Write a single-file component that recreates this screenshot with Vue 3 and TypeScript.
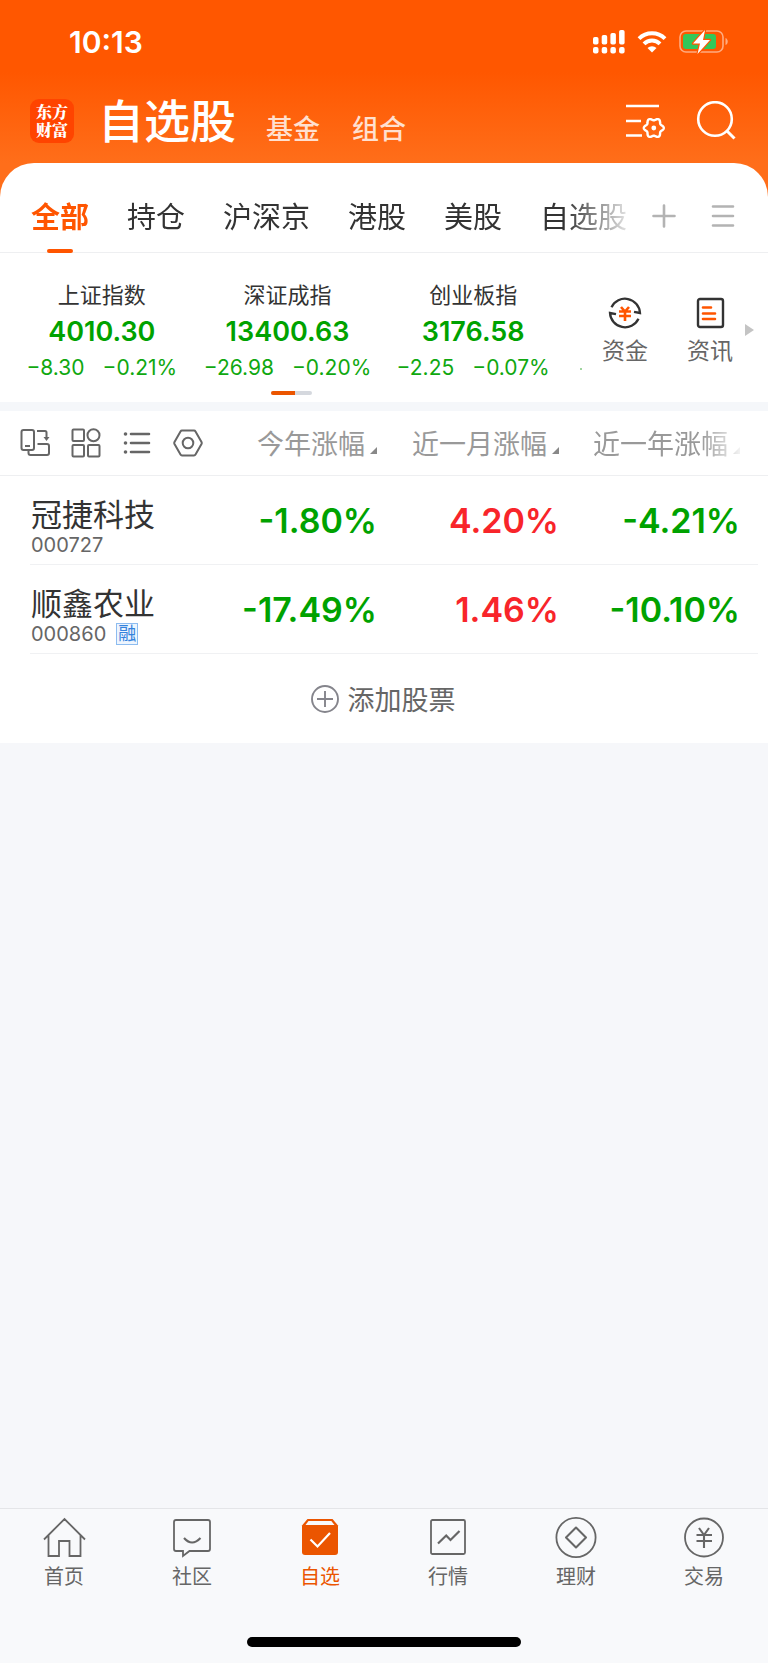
<script setup lang="ts">
import { ref } from 'vue'

interface IndexQuote {
  name: string
  price: string
  change: string
  percent: string
}

interface Stock {
  name: string
  code: string
  margin: boolean
  returns: string[]
}

const groups: string[] = ['全部', '持仓', '沪深京', '港股', '美股', '自选股']
const activeGroup = ref('全部')

const indices: IndexQuote[] = [
  { name: '上证指数', price: '4010.30', change: '−8.30', percent: '−0.21%' },
  { name: '深证成指', price: '13400.63', change: '−26.98', percent: '−0.20%' },
  { name: '创业板指', price: '3176.58', change: '−2.25', percent: '−0.07%' },
]

const columns: string[] = ['今年涨幅', '近一月涨幅', '近一年涨幅']

const stocks: Stock[] = [
  { name: '冠捷科技', code: '000727', margin: false, returns: ['-1.80%', '4.20%', '-4.21%'] },
  { name: '顺鑫农业', code: '000860', margin: true, returns: ['-17.49%', '1.46%', '-10.10%'] },
]

const navItems: string[] = ['首页', '社区', '自选', '行情', '理财', '交易']
const activeNav = ref('自选')

const tone = (value: string): string => (value.startsWith('-') ? 'down' : 'up')

// Outline of a six-lobed gear around (cx, cy).
function gear(cx: number, cy: number, radius: number, lobe: number): string {
  const points: string[] = []
  for (let i = 0; i < 72; i++) {
    const a = (i * Math.PI) / 36
    const r = radius + lobe * Math.cos(6 * a)
    points.push(`${(cx + r * Math.cos(a)).toFixed(2)} ${(cy + r * Math.sin(a)).toFixed(2)}`)
  }
  return `M${points.join('L')}Z`
}
</script>

<template>
  <div class="app">
    <header class="top">
      <div class="status">
        <span class="time">10:13</span>
        <div class="status-icons">
          <svg width="32" height="24" viewBox="0 0 32 24" fill="#fff" aria-hidden="true">
            <rect x="0" y="7" width="5.500" height="7.500" rx="1.800" />
            <rect x="8.700" y="5" width="5.500" height="9.500" rx="1.800" />
            <rect x="17.400" y="3" width="5.500" height="11.500" rx="1.800" />
            <rect x="26.100" y="0" width="5.500" height="14.500" rx="1.800" />
            <rect x="0" y="17" width="5.500" height="6.500" rx="2" />
            <rect x="8.700" y="17" width="5.500" height="6.500" rx="2" />
            <rect x="17.400" y="17" width="5.500" height="6.500" rx="2" />
            <rect x="26.100" y="17" width="5.500" height="6.500" rx="2" />
          </svg>
          <svg width="30" height="24" viewBox="0 0 30 24" aria-hidden="true">
            <g fill="none" stroke="#fff" stroke-width="4">
              <path d="M2 8.600a18.500 18.500 0 0 1 26 0" />
              <path d="M7 13.800a11.400 11.400 0 0 1 16 0" />
            </g>
            <path d="M15 22.600l-4.500-4.600a6.400 6.400 0 0 1 9 0z" fill="#fff" />
          </svg>
          <svg width="50" height="26" viewBox="0 0 50 26" aria-hidden="true">
            <rect x="1" y="2" width="43" height="21" rx="6" fill="none" stroke="#fff" stroke-opacity=".5" stroke-width="1.600" />
            <path d="M46.500 9v7c3-1 3-6 0-7z" fill="#fff" fill-opacity=".5" />
            <rect x="4" y="5" width="33" height="15" rx="3" fill="#34c759" />
            <path d="M26 1L14 14.500h7L18.500 25 31 11h-7z" fill="#fff" stroke="#ff5800" stroke-width="2.400" paint-order="stroke" stroke-linejoin="round" />
          </svg>
        </div>
      </div>
      <div class="title-row">
        <div class="logo">东方财富</div>
        <h1>自选股</h1>
        <nav class="sections">
          <a href="#fund">基金</a>
          <a href="#portfolio">组合</a>
        </nav>
        <div class="title-actions">
          <button type="button" aria-label="列表设置">
            <svg width="40" height="40" viewBox="0 0 40 40" fill="none" stroke="#fff" stroke-width="2.600" aria-hidden="true">
              <path d="M1 5h33M1 20h15M1 34.500h16" />
              <path :d="gear(28.8, 27, 8.8, 1.2)" stroke-width="2.400" stroke-linejoin="round" />
              <circle cx="28.800" cy="27" r="2.400" fill="#fff" stroke="none" />
            </svg>
          </button>
          <button type="button" aria-label="搜索">
            <svg width="40" height="40" viewBox="0 0 40 40" fill="none" stroke="#fff" stroke-width="2.600" aria-hidden="true">
              <circle cx="19" cy="18" r="16.800" />
              <path d="M30.500 29.500l8 8" stroke-width="3" />
            </svg>
          </button>
        </div>
      </div>
    </header>

    <main class="panel">
      <div class="group-bar">
        <div class="groups" role="tablist">
          <button
            v-for="group in groups"
            :key="group"
            type="button"
            role="tab"
            class="group"
            :class="{ active: group === activeGroup }"
            :aria-selected="group === activeGroup"
            @click="activeGroup = group"
          >{{ group }}</button>
        </div>
        <div class="group-tools">
          <button type="button" aria-label="添加分组">
            <svg width="24" height="24" viewBox="0 0 24 24" stroke="#b3b3b3" stroke-width="2.600" stroke-linecap="round" aria-hidden="true">
              <path d="M1.500 12h21M12 1.500v21" />
            </svg>
          </button>
          <button type="button" aria-label="分组菜单">
            <svg width="24" height="24" viewBox="0 0 24 24" stroke="#b3b3b3" stroke-width="2.600" stroke-linecap="round" aria-hidden="true">
              <path d="M2 2.500h20M2 12h20M2 21.500h20" />
            </svg>
          </button>
        </div>
      </div>

      <section class="market">
        <div class="indices">
          <div class="quotes">
            <article v-for="item in indices" :key="item.name" class="quote">
              <span class="quote-name">{{ item.name }}</span>
              <strong>{{ item.price }}</strong>
              <span class="quote-change"><span>{{ item.change }}</span><span>{{ item.percent }}</span></span>
            </article>
          </div>
          <div class="pager"><i></i></div>
        </div>
        <div class="shortcuts">
          <a href="#capital" class="shortcut">
            <svg width="34" height="34" viewBox="0 0 34 34" fill="none" stroke="#333" stroke-width="2.300" aria-hidden="true">
              <path d="M3.500 11.200A15 15 0 0 1 32 17l-6-1.200M30.500 22.800A15 15 0 0 1 2 17l6 1.200" />
              <path d="M13 11l4 4.500 4-4.500M11 15.500h12M11 20h12M17 15.500V25" stroke="#ff5500" stroke-width="2.600" />
            </svg>
            <span>资金</span>
          </a>
          <a href="#news" class="shortcut">
            <svg width="34" height="34" viewBox="0 0 34 34" fill="none" stroke="#333" stroke-width="2.400" aria-hidden="true">
              <rect x="5" y="3" width="25" height="28" rx="2" />
              <path d="M10 11.500h8M10 17.500h12M10 23h12" stroke="#ff5500" stroke-width="2.600" stroke-linecap="round" />
            </svg>
            <span>资讯</span>
          </a>
        </div>
        <button type="button" class="more" aria-label="更多">
          <svg width="10" height="14" viewBox="0 0 10 14" aria-hidden="true"><path d="M0 1v12l9-6z" fill="#c4c4c4" /></svg>
        </button>
      </section>

      <table class="stocks">
        <colgroup>
          <col />
          <col class="col-first" />
          <col class="col-second" />
          <col class="col-third" />
        </colgroup>
        <thead>
          <tr>
            <th>
              <div class="tools">
                <button type="button" aria-label="横屏">
                  <svg width="30" height="30" viewBox="0 0 30 30" aria-hidden="true">
                    <rect x="1.500" y="2" width="12.500" height="20" rx="2" />
                    <path d="M5 18h5M17 3h8q1.500 0 1.500 1.500V9M17.500 16H27q2 0 2 2v7q0 2-2 2H10.500q-2 0-2-2v-3" />
                    <path d="M23.500 9h6l-3 4z" fill="#666" stroke="none" />
                  </svg>
                </button>
                <button type="button" aria-label="宫格">
                  <svg width="30" height="30" viewBox="0 0 30 30" aria-hidden="true">
                    <rect x="1.500" y="1.500" width="11.500" height="11.500" rx="1" />
                    <circle cx="22.500" cy="7.200" r="6" />
                    <rect x="1.500" y="17" width="11.500" height="11.500" rx="1" />
                    <rect x="17" y="17" width="11.500" height="11.500" rx="1" />
                  </svg>
                </button>
                <button type="button" aria-label="列表">
                  <svg width="30" height="30" viewBox="0 0 30 30" aria-hidden="true">
                    <path d="M9 6h18M9 15h18M9 24h18" stroke-width="2.600" stroke-linecap="round" />
                    <g fill="#666" stroke="none">
                      <circle cx="3.500" cy="6" r="1.800" /><circle cx="3.500" cy="15" r="1.800" /><circle cx="3.500" cy="24" r="1.800" />
                    </g>
                  </svg>
                </button>
                <button type="button" aria-label="设置">
                  <svg width="30" height="30" viewBox="0 0 30 30" aria-hidden="true">
                    <path d="M9 2.500h12q1 0 1.500.9l6 10.600q.5 1 0 2l-6 10.600q-.5.900-1.500.9H9q-1 0-1.500-.9L1.500 16q-.5-1 0-2l6-10.600Q8 2.500 9 2.500z" />
                    <circle cx="15" cy="15" r="5.300" />
                  </svg>
                </button>
              </div>
            </th>
            <th v-for="column in columns" :key="column">
              <button type="button" class="sort">
                {{ column }}<svg width="7" height="7" viewBox="0 0 7 7" aria-hidden="true"><path d="M7 0v7H0z" fill="#888" /></svg>
              </button>
            </th>
          </tr>
        </thead>
        <tbody>
          <tr v-for="stock in stocks" :key="stock.code">
            <td>
              <span class="stock-name">{{ stock.name }}</span>
              <span class="stock-code">{{ stock.code }}<b v-if="stock.margin">融</b></span>
            </td>
            <td v-for="(value, i) in stock.returns" :key="i" class="value" :class="tone(value)">{{ value }}</td>
          </tr>
        </tbody>
      </table>

      <button type="button" class="add">
        <svg width="30" height="30" viewBox="0 0 30 30" fill="none" stroke="#85858c" stroke-width="1.900" aria-hidden="true">
          <circle cx="15" cy="15" r="13" /><path d="M7 15h16M15 7v16" />
        </svg>
        添加股票
      </button>
    </main>

    <footer class="bottom">
      <nav class="nav">
        <a
          v-for="(item, i) in navItems"
          :key="item"
          :href="'#tab' + i"
          :class="{ active: item === activeNav }"
          @click.prevent="activeNav = item"
        >
          <svg width="42" height="42" viewBox="0 0 42 42" aria-hidden="true">
            <path v-if="i === 0" d="M1 22.500L21.500 2 42 22.500M5.500 18.500v20.500h10.500V24h10.500v15H37.500V18.500" />
            <template v-else-if="i === 1">
              <path d="M5 3h32q2 0 2 2v27q0 2-2 2H18.500L12 39v-5H5q-2 0-2-2V5q0-2 2-2z" />
              <path d="M13 21q8 9 16.500 0" stroke-width="2.100" />
            </template>
            <template v-else-if="i === 2">
              <path d="M3 8.500L8.500 2h25L39 8.500V35q0 3-3 3H6q-3 0-3-3z" fill="#eb5500" stroke="none" />
              <path d="M9.500 4h22.800l3.200 4H6.500z" fill="#f8f9fb" stroke="none" />
              <path d="M11.500 22.500l7 7L31 16" stroke="#fff" stroke-width="2.200" />
            </template>
            <template v-else-if="i === 3">
              <rect x="4" y="3" width="34" height="34" rx="1.500" />
              <path d="M11 26.500l8.200-8 4.300 4.500 9-9" stroke-width="2.200" />
            </template>
            <template v-else-if="i === 4">
              <circle cx="21" cy="20.500" r="19.600" />
              <path d="M21 10.500L31 20.500 21 30.500 11 20.500z" stroke-width="2.100" stroke-linejoin="round" />
            </template>
            <template v-else>
              <circle cx="21" cy="20.500" r="19" />
              <path d="M16 11l5 7 5-7M13.500 18h15.500M13.500 24h15.500M21 18v13" stroke-width="2.100" />
            </template>
          </svg>
          <span>{{ item }}</span>
        </a>
      </nav>
      <div class="home-indicator"></div>
    </footer>
  </div>
</template>

<style>
body {
  margin: 0;
  background: #f6f7fa;
}
</style>

<style scoped>
.app {
  display: flex;
  flex-direction: column;
  min-height: 100vh;
  background: #f6f7fa;
  color: #333;
  font-family: Inter, "Noto Sans CJK SC", sans-serif;
}

button {
  display: flex;
  align-items: center;
  padding: 0;
  border: 0;
  background: none;
  color: inherit;
  font: inherit;
  cursor: pointer;
}

a {
  color: inherit;
  text-decoration: none;
}

svg {
  display: block;
  flex: none;
}

.top {
  height: 197px;
  box-sizing: border-box;
  margin-bottom: -34px;
  background: linear-gradient(#ff5700 0, #ff5700 72px, #ff6e1a 163px);
  color: #fff;
}

.status {
  display: flex;
  align-items: center;
  justify-content: space-between;
  height: 84px;
  padding: 0 39px 0 69px;
}

.time {
  font-size: 30px;
  font-weight: 600;
}

.status-icons {
  display: flex;
  align-items: center;
  gap: 12px;
}

.title-row {
  display: flex;
  align-items: center;
  height: 73px;
  padding: 0 32px 0 30px;
}

.logo {
  box-sizing: border-box;
  width: 44px;
  height: 44px;
  padding: 4px 6px;
  border-radius: 9px;
  background: #ff4400;
  font-family: "Noto Serif CJK SC", "Noto Sans CJK SC", serif;
  font-size: 16px;
  font-weight: 900;
  line-height: 18px;
}

h1 {
  margin: 0 0 0 24px;
  font-size: 46px;
  font-weight: 500;
  line-height: 60px;
}

.sections {
  display: flex;
  gap: 32px;
  margin-left: 30px;
  padding-top: 19px;
  color: #ffe0d0;
  font-size: 27px;
  font-weight: 500;
  line-height: 36px;
}

.title-actions {
  display: flex;
  gap: 31px;
  margin-left: auto;
}

.panel {
  border-radius: 34px 34px 0 0;
  background: #fff;
}

.group-bar {
  display: flex;
  align-items: center;
  height: 89px;
  border-bottom: 1px solid #eeeff1;
}

.groups {
  display: flex;
  flex: 1;
  gap: 38px;
  min-width: 0;
  height: 90px;
  padding-left: 31px;
  overflow: hidden;
  mask-image: linear-gradient(90deg, #000 calc(100% - 72px), transparent);
}

.group {
  position: relative;
  flex: none;
  padding-top: 14px;
  color: #333;
  font-size: 29px;
}

.group.active {
  color: #ff5500;
  font-weight: 700;
}

.group.active::after {
  content: "";
  position: absolute;
  bottom: 0;
  left: calc(50% - 13px);
  width: 26px;
  height: 4px;
  border-radius: 2px;
  background: #ff5500;
}

.group-tools {
  display: flex;
  gap: 35px;
  padding: 17px 33px 0 15px;
}

.market {
  display: flex;
  height: 149px;
  border-bottom: 9px solid #f5f7fa;
}

.indices {
  position: relative;
  flex: 1;
  min-width: 0;
  padding: 27px 0 0 9px;
}

.indices::after {
  content: "";
  position: absolute;
  right: 11px;
  bottom: 32px;
  width: 2px;
  height: 2px;
  border-radius: 1px;
  background: #7fc77f;
}

.quotes {
  display: grid;
  grid-template-columns: repeat(3, 1fr);
  max-width: 557px;
}

.quote {
  display: flex;
  flex-direction: column;
  align-items: center;
  white-space: nowrap;
}

.quote-name {
  font-size: 22px;
  line-height: 31px;
}

.quote strong {
  color: #00a200;
  font-size: 27px;
  font-weight: 600;
  line-height: 41px;
}

.quote-change {
  display: flex;
  gap: 18px;
  color: #10a810;
  font-size: 21px;
  line-height: 32px;
}

.pager {
  width: 41px;
  height: 4px;
  margin: 7px auto 0 262px;
  border-radius: 2px;
  background: #d5d8de;
}

.pager i {
  display: block;
  width: 24px;
  height: 4px;
  border-radius: 2px 0 0 2px;
  background: #eb5500;
}

.shortcuts {
  display: flex;
  gap: 21px;
}

.shortcut {
  display: flex;
  flex-direction: column;
  align-items: center;
  gap: 4px;
  width: 64px;
  padding-top: 43px;
  color: #666;
  font-size: 23px;
  line-height: 34px;
}

.more {
  width: 26px;
  padding: 4px 0 0 3px;
}

.stocks {
  width: 100%;
  border-collapse: separate;
  border-spacing: 0;
  table-layout: fixed;
}

.col-first {
  width: 163px;
}

.col-second {
  width: 182px;
}

.col-third {
  width: 209px;
}

th {
  height: 65px;
  box-sizing: border-box;
  padding: 0;
  border-bottom: 1px solid #eeeff1;
  font-weight: 400;
}

.tools {
  display: flex;
  gap: 21px;
  padding-left: 20px;
}

.tools svg {
  fill: none;
  stroke: #666;
  stroke-width: 2;
}

.sort {
  float: right;
  align-items: baseline;
  gap: 5px;
  padding-top: 4px;
  color: #999;
  font-size: 27px;
  line-height: 36px;
  white-space: nowrap;
}

th:last-child .sort {
  margin-right: 28px;
  mask-image: linear-gradient(90deg, #000 calc(100% - 40px), rgba(0, 0, 0, 0.1));
}

td {
  height: 89px;
  box-sizing: border-box;
  padding: 0;
  background: linear-gradient(#f0f1f3, #f0f1f3) no-repeat right bottom / 100% 1px;
}

td:first-child {
  padding: 12px 0 0 31px;
  background-size: calc(100% - 30px) 1px;
}

td:last-child {
  background-position: left bottom;
  background-size: calc(100% - 10px) 1px;
}

.stock-name {
  display: block;
  color: #333;
  font-size: 31px;
  line-height: 36px;
  white-space: nowrap;
}

.stock-code {
  display: flex;
  align-items: center;
  gap: 10px;
  height: 24px;
  color: #666;
  font-size: 20px;
}

.stock-code b {
  box-sizing: border-box;
  width: 22px;
  height: 22px;
  border: 1px solid #8dbcf0;
  background: #edf5fe;
  color: #3482dc;
  font-size: 18px;
  font-weight: 400;
  line-height: 20px;
  text-align: center;
}

.value {
  font-size: 34px;
  font-weight: 600;
  text-align: right;
}

.value:last-child {
  padding-right: 28px;
}

.down {
  color: #00a200;
}

.up {
  color: #f8252a;
}

.add {
  justify-content: center;
  gap: 8px;
  width: 100%;
  height: 89px;
  padding-right: 3px;
  color: #666;
  font-size: 27px;
}

.bottom {
  margin-top: auto;
  border-top: 1px solid #e4e5e8;
  background: #f8f9fb;
}

.nav {
  display: flex;
  padding-top: 8px;
}

.nav a {
  display: flex;
  flex: 1;
  flex-direction: column;
  align-items: center;
  gap: 2px;
  color: #666;
  font-size: 20px;
  line-height: 32px;
}

.nav svg {
  overflow: visible;
  fill: none;
  stroke: #666;
  stroke-width: 1.8px;
}

.nav .active {
  color: #eb5500;
}

.home-indicator {
  width: 274px;
  height: 10px;
  margin: 44px auto 16px;
  border-radius: 5px;
  background: #000;
}
</style>
